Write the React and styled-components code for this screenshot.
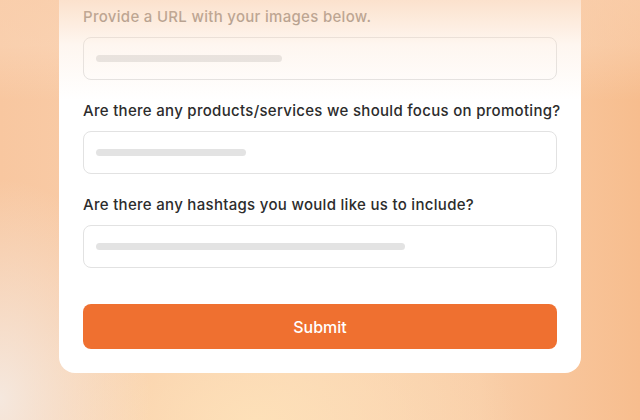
import React from 'react'
import styled, { createGlobalStyle } from 'styled-components'

const GlobalStyle = createGlobalStyle`
  html, body {
    margin: 0;
    padding: 0;
  }
  body {
    font-family: Inter, "Noto Sans", sans-serif;
  }
`

const Page = styled.div`
  position: relative;
  width: 640px;
  height: 420px;
  overflow: hidden;
  background:
    radial-gradient(ellipse 150px 220px at 0% 95%, #f5e8de 0%, rgba(245, 232, 222, 0) 100%),
    radial-gradient(ellipse 260px 150px at 40% 100%, #fde0b8 0%, rgba(253, 224, 184, 0) 100%),
    linear-gradient(90deg, #f8c7a0 0%, #fad4b4 45%, #f9cea8 75%, #f7bd8e 100%);

  &::after {
    content: '';
    position: absolute;
    left: 0;
    right: 0;
    top: 0;
    height: 100px;
    pointer-events: none;
    background: linear-gradient(180deg, rgba(250, 210, 178, 0.65) 0%, rgba(252, 226, 205, 0.3) 45%, rgba(255, 255, 255, 0) 100%);
  }
`

const Card = styled.div`
  margin-left: 59px;
  width: 522px;
  box-sizing: border-box;
  background: #fff;
  border-radius: 0 0 16px 16px;
  padding: 7px 24px 24px;
  display: flex;
  flex-direction: column;
`

const Field = styled.div`
  display: flex;
  flex-direction: column;
  gap: 10px;
  margin-bottom: 21px;
`

const Label = styled.div`
  font-size: 15px;
  line-height: 20px;
  font-weight: 500;
  color: ${p => (p.$muted ? '#7a716a' : '#2c2c2c')};
  letter-spacing: 0.3px;
  white-space: nowrap;
`

const Input = styled.div`
  height: 43px;
  box-sizing: border-box;
  border: 1.5px solid #e2e2e2;
  border-radius: 8px;
  background: #fff;
  display: flex;
  align-items: center;
  padding: 0 12px;
`

const Placeholder = styled.div`
  height: 7px;
  border-radius: 4px;
  background: #e3e3e3;
`

const SubmitButton = styled.button`
  margin-top: 15px;
  height: 45px;
  border: none;
  border-radius: 8px;
  background: #ef7030;
  color: #fff;
  font-family: Inter, "Noto Sans", sans-serif;
  font-size: 16px;
  font-weight: 500;
  cursor: pointer;
`

const fields = [
  { label: 'Provide a URL with your images below.', bar: 186, muted: true },
  { label: 'Are there any products/services we should focus on promoting?', bar: 150 },
  { label: 'Are there any hashtags you would like us to include?', bar: 309 },
]

function App() {
  return (
    <>
      <GlobalStyle />
      <Page>
        <Card>
          {fields.map(f => (
            <Field key={f.label}>
              <Label $muted={f.muted}>{f.label}</Label>
              <Input>
                <Placeholder style={{ width: f.bar }} />
              </Input>
            </Field>
          ))}
          <SubmitButton>Submit</SubmitButton>
        </Card>
      </Page>
    </>
  )
}

export default App
